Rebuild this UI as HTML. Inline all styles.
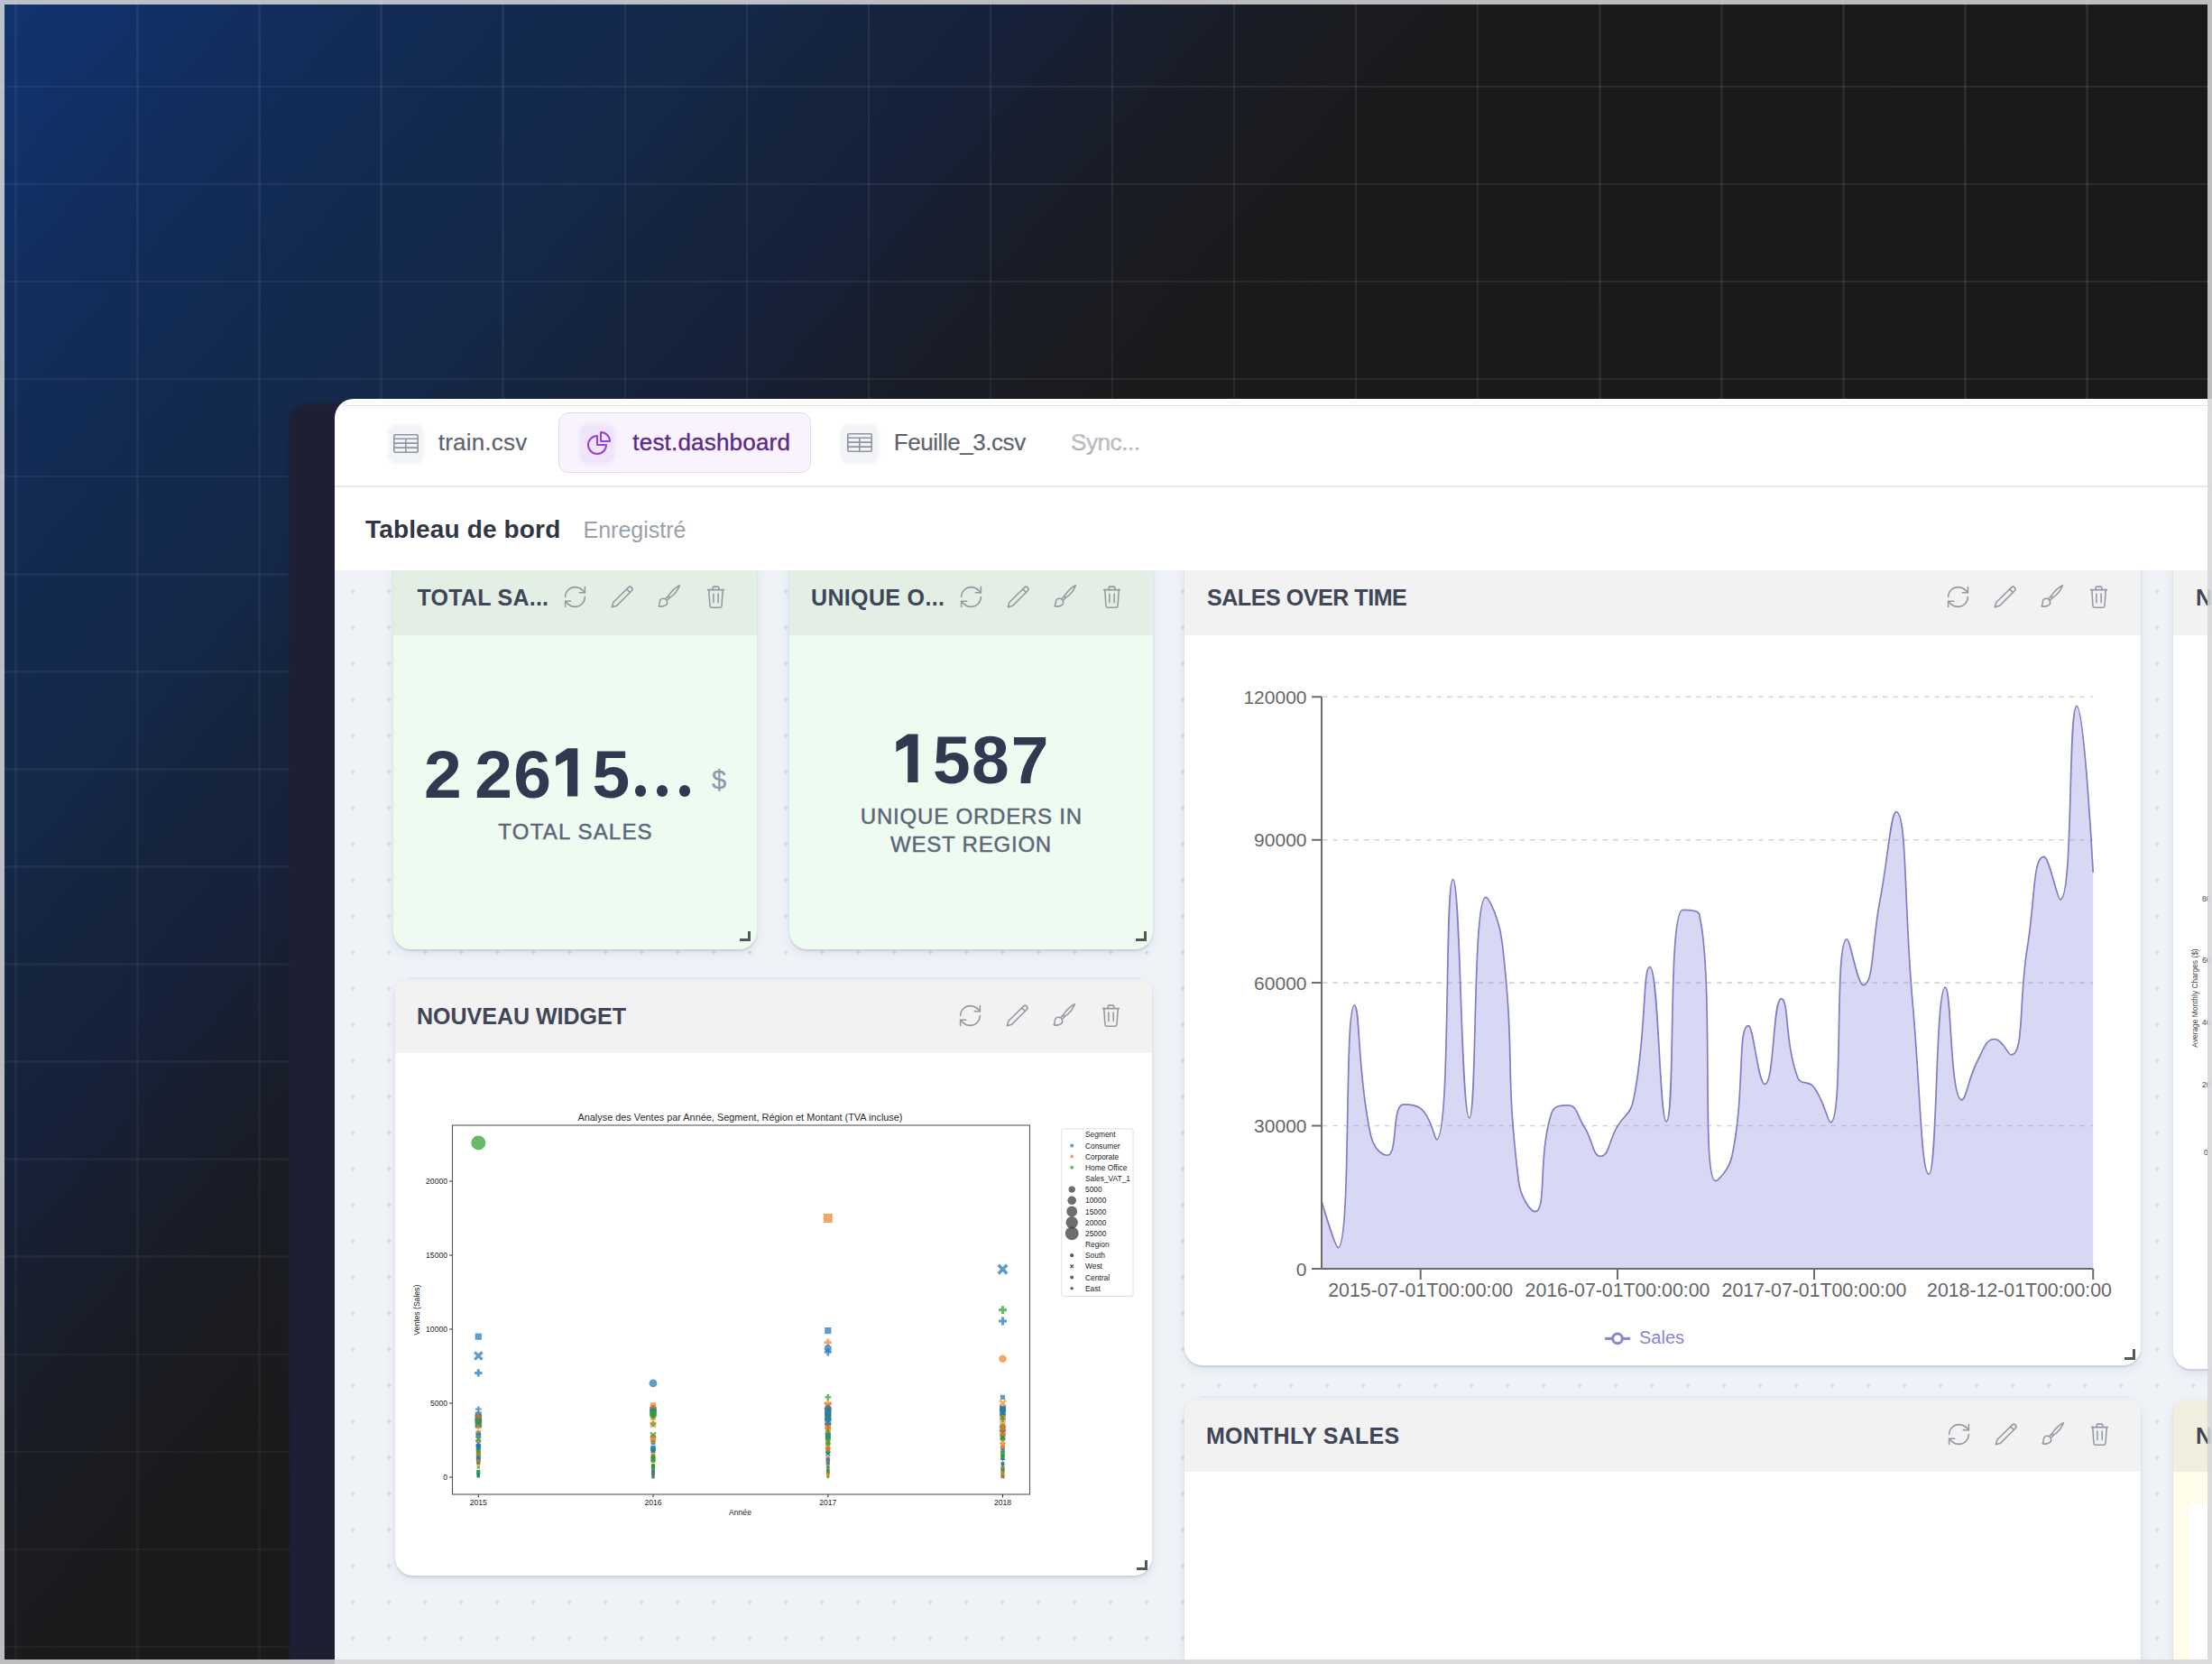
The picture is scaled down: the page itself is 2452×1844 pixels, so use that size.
<!DOCTYPE html>
<html><head><meta charset="utf-8">
<style>
*{box-sizing:border-box;margin:0;padding:0}
html,body{width:2452px;height:1844px;overflow:hidden;background:#c3c3c5;font-family:"Liberation Sans",sans-serif}
#bg{position:absolute;left:0;top:0;width:2452px;height:1844px;overflow:hidden;
 background:linear-gradient(131deg,#10336f 0%,#11316a 3%,#122d5c 8%,#122a50 14%,#142849 20%,#15243e 24%,#16213a 28%,#171f30 31%,#191c25 35%,#1a1b1e 39%,#1a1a1a 43%,#1a1a1a 100%)}
#bg .gv{position:absolute;top:0;width:2.5px;height:100%;background:rgba(255,255,255,0.085)}
#bg .gh{position:absolute;left:0;height:2.5px;width:100%;background:rgba(255,255,255,0.085)}
#grid{position:absolute;left:0;top:0;width:2452px;height:1844px;-webkit-mask-image:linear-gradient(to top right,rgba(0,0,0,0.42) 0%,rgba(0,0,0,0.62) 45%,#000 100%)}
#panel{position:absolute;left:320px;top:447px;width:200px;height:1500px;background:#1e1f33;border-radius:22px 0 0 0;filter:blur(1.5px)}
#win{position:absolute;left:371px;top:442px;width:2081px;height:1402px;background:#fff;border-radius:21px 0 0 0;overflow:hidden}
.abs{position:absolute}
.bd{position:absolute;background:rgba(214,214,216,0.87)}
.topline{position:absolute;left:9px;top:7.2px;right:0;height:1.2px;background:#e4e5ec}
.sep{position:absolute;left:0;top:96px;right:0;height:1.5px;background:#e6e7eb}
.ibox{position:absolute;width:36px;height:40px;border-radius:7px;background:#f2f3f6;box-shadow:0 0 4px 2px #f2f3f6}
.ibox > svg{position:absolute;left:4px;top:8.5px}
.tabt{position:absolute;font-size:26px;letter-spacing:0.2px;color:#5d6470;-webkit-text-stroke:0.2px #5d6470;white-space:nowrap;line-height:1}
.act{position:absolute;left:247.5px;top:15.3px;width:280px;height:67px;border-radius:11px;background:#f9f3fd;border:1.5px solid #e3dcef}
#dash{position:absolute;left:371px;top:632px;width:2081px;height:1212px;overflow:hidden;background-color:#eff3f8;
}
.card{position:absolute;border-radius:20px;overflow:hidden;box-shadow:0 1.5px 2px rgba(70,80,110,0.16),0 4px 12px rgba(70,80,110,0.10)}
.hdr{position:absolute;left:0;top:0;right:0;height:80.3px}
.ttl{position:absolute;left:26px;font-size:25px;font-weight:bold;color:#3e4657;white-space:nowrap;line-height:1}
.ic{position:absolute;width:29px;height:29px;fill:none;stroke:#949aa3;stroke-width:1.3;stroke-linecap:round;stroke-linejoin:round}
.bn{position:absolute;font-size:75px;font-weight:bold;color:#2f3a50;line-height:1}
.dot{position:absolute;width:12.4px;height:12.4px;border-radius:50%;background:#2f3a50}
.hdl{position:absolute;width:11.5px;height:11.5px;border-right:3.2px solid #535855;border-bottom:3.2px solid #535855}
#grid svg text{font-family:"Liberation Sans",sans-serif}
</style></head><body>
<div id="bg"><div id="grid"><div class="gv" style="left:16.25px"></div>
<div class="gv" style="left:151.31px"></div>
<div class="gv" style="left:286.37px"></div>
<div class="gv" style="left:421.43px"></div>
<div class="gv" style="left:556.49px"></div>
<div class="gv" style="left:691.55px"></div>
<div class="gv" style="left:826.61px"></div>
<div class="gv" style="left:961.67px"></div>
<div class="gv" style="left:1096.73px"></div>
<div class="gv" style="left:1231.79px"></div>
<div class="gv" style="left:1366.85px"></div>
<div class="gv" style="left:1501.91px"></div>
<div class="gv" style="left:1636.97px"></div>
<div class="gv" style="left:1772.03px"></div>
<div class="gv" style="left:1907.09px"></div>
<div class="gv" style="left:2042.15px"></div>
<div class="gv" style="left:2177.21px"></div>
<div class="gv" style="left:2312.27px"></div>
<div class="gv" style="left:2447.33px"></div>
<div class="gh" style="top:94.75px"></div>
<div class="gh" style="top:202.81px"></div>
<div class="gh" style="top:310.87px"></div>
<div class="gh" style="top:418.93px"></div>
<div class="gh" style="top:526.99px"></div>
<div class="gh" style="top:635.05px"></div>
<div class="gh" style="top:743.11px"></div>
<div class="gh" style="top:851.17px"></div>
<div class="gh" style="top:959.23px"></div>
<div class="gh" style="top:1067.29px"></div>
<div class="gh" style="top:1175.35px"></div>
<div class="gh" style="top:1283.41px"></div>
<div class="gh" style="top:1391.47px"></div>
<div class="gh" style="top:1499.53px"></div>
<div class="gh" style="top:1607.59px"></div>
<div class="gh" style="top:1715.65px"></div>
<div class="gh" style="top:1823.71px"></div></div><div id="panel"></div></div>
<div id="win">
  <div class="topline"></div>
  <div class="ibox" style="left:60.5px;top:30px"><svg viewBox="0 0 28 21" width="28" height="21" fill="none" stroke="#8f95a0" stroke-width="1.6"><rect x="0.8" y="0.8" width="26.4" height="19.4" rx="1.2"/><path d="M0.8 5.2h26.4M0.8 10.1h26.4M0.8 15.1h26.4M13.8 5.2v15"/></svg></div>
  <div class="tabt" style="left:114.8px;top:35.2px">train.csv</div>
  <div class="act"></div>
  <div class="ibox" style="left:273px;top:29.5px;background:#efe5fb;box-shadow:0 0 4px 2px #efe5fb"><div style="position:absolute;left:4.4px;top:3.5px"><svg viewBox="0 0 24 24" width="32" height="32" fill="none" stroke="#9a3fd6" stroke-width="1.5" stroke-linecap="round" stroke-linejoin="round"><path d="M10.5 6a7.5 7.5 0 1 0 7.5 7.5h-7.5V6Z"/><path d="M13.5 10.5H21A7.5 7.5 0 0 0 13.5 3v7.5Z"/></svg></div></div>
  <div class="tabt" style="left:330.3px;top:35.2px;color:#5b2a87;-webkit-text-stroke:0.35px #5b2a87">test.dashboard</div>
  <div class="ibox" style="left:562px;top:30px;width:39px"><div style="position:absolute;left:6px;top:8px"><svg viewBox="0 0 28 21" width="28" height="21" fill="none" stroke="#8f95a0" stroke-width="1.6"><rect x="0.8" y="0.8" width="26.4" height="19.4" rx="1.2"/><path d="M0.8 5.2h26.4M0.8 10.1h26.4M0.8 15.1h26.4M13.8 5.2v15"/></svg></div></div>
  <div class="tabt" style="left:619.8px;top:35.2px;letter-spacing:-0.45px">Feuille_3.csv</div>
  <div class="tabt" style="left:816px;top:35.2px;color:#c5c6c9;letter-spacing:-0.4px">Sync...</div>
  <div class="sep"></div>
  <div class="abs" style="left:34px;top:130.8px;letter-spacing:0.15px;font-size:28px;font-weight:bold;color:#2f3542;line-height:1;white-space:nowrap">Tableau de bord</div>
  <div class="abs" style="left:275.5px;top:133.3px;font-size:25px;color:#9aa1ab;line-height:1;white-space:nowrap">Enregistré</div>
</div>
<div id="dash"><svg style="position:absolute;left:0;top:0" width="2076" height="1207"><defs><pattern id="dp" width="40" height="40" patternUnits="userSpaceOnUse" x="0.3" y="3.5"><path d="M20 17.4v5.2M17.4 20h5.2" stroke="#b4b8c0" stroke-width="1.1" stroke-opacity="0.5"/><circle cx="20" cy="20" r="0.8" fill="#a9adb5" fill-opacity="0.55"/></pattern></defs><rect width="2076" height="1207" fill="url(#dp)"/></svg>
  <!-- card 1 -->
  <div class="card" style="border-radius:0 0 20px 20px;left:65px;top:-8.3px;width:403px;height:427.8px;background:#eefbf1">
    <div class="hdr" style="background:#e3efe4"></div>
  </div>
  <div class="ttl abs" style="left:91.5px;top:17.7px;letter-spacing:0.25px">TOTAL SA...</div>
  <svg class="ic" style="left:251.5px;top:15.0px" viewBox="0 0 24 24"><path d="M3 12a9 9 0 0 1 9-9 9.75 9.75 0 0 1 6.74 2.74L21 8"/><path d="M21 3v5h-5"/><path d="M21 12a9 9 0 0 1-9 9 9.75 9.75 0 0 1-6.74-2.74L3 16"/><path d="M8 16H3v5"/></svg>
<svg class="ic" style="left:303.5px;top:15.0px" viewBox="0 0 24 24"><path d="M17.8 3.4a2.1 2.1 0 0 1 3 3L7.2 20 2.8 21.3 4 17Z"/><path d="m16.3 4.9 3 3"/></svg>
<svg class="ic" style="left:355.5px;top:15.0px" viewBox="0 0 24 24"><g transform="translate(0,-1)"><path d="M21.8 2.4C17.9 4.3 14 8.1 11.3 12.3L12.7 13.7C16.9 11 20.2 6.9 21.8 2.4Z"/><path d="M11.3 12.3L9.4 14.2M12.7 13.7L10.8 15.6"/><path d="M2.6 21.4C3.6 20.6 3.2 19 3.6 17.9A3.4 3.4 0 1 1 7.9 21.1C6.4 21.9 4.2 21.9 2.6 21.4Z"/></g></svg>
<svg class="ic" style="left:407.5px;top:15.0px" viewBox="0 0 24 24"><path d="M4.6 5.5H19.4"/><path d="M9.3 5.5V3.3a.7.7 0 0 1 .7-.7h4a.7.7 0 0 1 .7.7V5.5"/><path d="M5.6 5.5l1 14.8a1.5 1.5 0 0 0 1.5 1.4h7.8a1.5 1.5 0 0 0 1.5-1.4l1-14.8"/><path d="M9.8 9.2v8M14.2 9.2v8"/></svg>
  <div class="bn" style="left:99.0px;top:188.5px">2</div><div class="bn" style="left:155.2px;top:188.5px">2</div><div class="bn" style="left:198.3px;top:188.5px">6</div><div class="bn" style="left:285.6px;top:188.5px">5</div>
  <div class="dot" style="left:332.6px;top:238.4px"></div><div class="dot" style="left:357.0px;top:238.4px"></div><div class="dot" style="left:381.5px;top:238.4px"></div>
  <div class="abs" style="left:418.0px;top:218.0px;font-size:29px;color:#8c98aa;line-height:1;-webkit-text-stroke:0.3px #8c98aa">$</div>
  <div class="abs" style="left:65px;width:403px;text-align:center;top:277.5px;font-size:24px;color:#5b6678;letter-spacing:1.2px;text-indent:1.2px;line-height:1;-webkit-text-stroke:0.45px #5b6678">TOTAL SALES</div>
  <div class="hdl" style="left:449.0px;top:399.5px"></div>

  <!-- card 2 -->
  <div class="card" style="border-radius:0 0 20px 20px;left:504px;top:-8.3px;width:403px;height:427.8px;background:#eefbf1">
    <div class="hdr" style="background:#e3efe4"></div>
  </div>
  <div class="ttl abs" style="left:528.0px;top:17.7px;letter-spacing:0.35px">UNIQUE O...</div>
  <svg class="ic" style="left:690.5px;top:15.0px" viewBox="0 0 24 24"><path d="M3 12a9 9 0 0 1 9-9 9.75 9.75 0 0 1 6.74 2.74L21 8"/><path d="M21 3v5h-5"/><path d="M21 12a9 9 0 0 1-9 9 9.75 9.75 0 0 1-6.74-2.74L3 16"/><path d="M8 16H3v5"/></svg>
<svg class="ic" style="left:742.5px;top:15.0px" viewBox="0 0 24 24"><path d="M17.8 3.4a2.1 2.1 0 0 1 3 3L7.2 20 2.8 21.3 4 17Z"/><path d="m16.3 4.9 3 3"/></svg>
<svg class="ic" style="left:794.5px;top:15.0px" viewBox="0 0 24 24"><g transform="translate(0,-1)"><path d="M21.8 2.4C17.9 4.3 14 8.1 11.3 12.3L12.7 13.7C16.9 11 20.2 6.9 21.8 2.4Z"/><path d="M11.3 12.3L9.4 14.2M12.7 13.7L10.8 15.6"/><path d="M2.6 21.4C3.6 20.6 3.2 19 3.6 17.9A3.4 3.4 0 1 1 7.9 21.1C6.4 21.9 4.2 21.9 2.6 21.4Z"/></g></svg>
<svg class="ic" style="left:846.5px;top:15.0px" viewBox="0 0 24 24"><path d="M4.6 5.5H19.4"/><path d="M9.3 5.5V3.3a.7.7 0 0 1 .7-.7h4a.7.7 0 0 1 .7.7V5.5"/><path d="M5.6 5.5l1 14.8a1.5 1.5 0 0 0 1.5 1.4h7.8a1.5 1.5 0 0 0 1.5-1.4l1-14.8"/><path d="M9.8 9.2v8M14.2 9.2v8"/></svg>
  <div class="bn" style="left:663.0px;top:172.9px">5</div><div class="bn" style="left:706.0px;top:172.9px">8</div><div class="bn" style="left:749.8px;top:172.9px">7</div>
  <div class="abs" style="left:504px;width:403px;text-align:center;top:256.5px;font-size:24px;color:#5b6678;letter-spacing:0.8px;text-indent:0.8px;line-height:31.7px;-webkit-text-stroke:0.45px #5b6678">UNIQUE ORDERS IN<br>WEST REGION</div>
  <div class="hdl" style="left:888.0px;top:399.5px"></div>

  <!-- card 3 sales over time -->
  <div class="card" style="border-radius:0 0 20px 20px;left:942px;top:-8.3px;width:1060px;height:889.3px;background:#fff">
    <div class="hdr" style="background:#f2f2f2"></div>
  </div>
  <div class="ttl abs" style="left:967.0px;top:17.7px;letter-spacing:-0.43px">SALES OVER TIME</div>
  <svg class="ic" style="left:1785.0px;top:15.0px" viewBox="0 0 24 24"><path d="M3 12a9 9 0 0 1 9-9 9.75 9.75 0 0 1 6.74 2.74L21 8"/><path d="M21 3v5h-5"/><path d="M21 12a9 9 0 0 1-9 9 9.75 9.75 0 0 1-6.74-2.74L3 16"/><path d="M8 16H3v5"/></svg>
<svg class="ic" style="left:1837.0px;top:15.0px" viewBox="0 0 24 24"><path d="M17.8 3.4a2.1 2.1 0 0 1 3 3L7.2 20 2.8 21.3 4 17Z"/><path d="m16.3 4.9 3 3"/></svg>
<svg class="ic" style="left:1889.0px;top:15.0px" viewBox="0 0 24 24"><g transform="translate(0,-1)"><path d="M21.8 2.4C17.9 4.3 14 8.1 11.3 12.3L12.7 13.7C16.9 11 20.2 6.9 21.8 2.4Z"/><path d="M11.3 12.3L9.4 14.2M12.7 13.7L10.8 15.6"/><path d="M2.6 21.4C3.6 20.6 3.2 19 3.6 17.9A3.4 3.4 0 1 1 7.9 21.1C6.4 21.9 4.2 21.9 2.6 21.4Z"/></g></svg>
<svg class="ic" style="left:1941.0px;top:15.0px" viewBox="0 0 24 24"><path d="M4.6 5.5H19.4"/><path d="M9.3 5.5V3.3a.7.7 0 0 1 .7-.7h4a.7.7 0 0 1 .7.7V5.5"/><path d="M5.6 5.5l1 14.8a1.5 1.5 0 0 0 1.5 1.4h7.8a1.5 1.5 0 0 0 1.5-1.4l1-14.8"/><path d="M9.8 9.2v8M14.2 9.2v8"/></svg>
  <div class="hdl" style="left:1984.0px;top:863.0px"></div>

  <!-- card 4 partial right -->
  <div class="card" style="border-radius:0 0 20px 20px;left:2038px;top:-8.3px;width:600px;height:893.3px;background:#fff">
    <div class="hdr" style="background:#f2f2f2"></div>
  </div>
  <div class="ttl abs" style="left:2063.0px;top:17.7px">N</div>

  <!-- card 5 nouveau widget -->
  <div class="abs" style="left:81px;top:450.6px;width:812px;height:2px;background:#e2ecf6;border-radius:1px"></div>
  <div class="card" style="border-radius:12px 12px 20px 20px;left:66.5px;top:454.7px;width:839.5px;height:659.3px;background:#fff">
    <div class="hdr" style="background:#f2f2f2"></div>
  </div>
  <div class="ttl abs" style="left:91.0px;top:481.5px">NOUVEAU WIDGET</div>
  <svg class="ic" style="left:690.0px;top:479.0px" viewBox="0 0 24 24"><path d="M3 12a9 9 0 0 1 9-9 9.75 9.75 0 0 1 6.74 2.74L21 8"/><path d="M21 3v5h-5"/><path d="M21 12a9 9 0 0 1-9 9 9.75 9.75 0 0 1-6.74-2.74L3 16"/><path d="M8 16H3v5"/></svg>
<svg class="ic" style="left:742.0px;top:479.0px" viewBox="0 0 24 24"><path d="M17.8 3.4a2.1 2.1 0 0 1 3 3L7.2 20 2.8 21.3 4 17Z"/><path d="m16.3 4.9 3 3"/></svg>
<svg class="ic" style="left:794.0px;top:479.0px" viewBox="0 0 24 24"><g transform="translate(0,-1)"><path d="M21.8 2.4C17.9 4.3 14 8.1 11.3 12.3L12.7 13.7C16.9 11 20.2 6.9 21.8 2.4Z"/><path d="M11.3 12.3L9.4 14.2M12.7 13.7L10.8 15.6"/><path d="M2.6 21.4C3.6 20.6 3.2 19 3.6 17.9A3.4 3.4 0 1 1 7.9 21.1C6.4 21.9 4.2 21.9 2.6 21.4Z"/></g></svg>
<svg class="ic" style="left:846.0px;top:479.0px" viewBox="0 0 24 24"><path d="M4.6 5.5H19.4"/><path d="M9.3 5.5V3.3a.7.7 0 0 1 .7-.7h4a.7.7 0 0 1 .7.7V5.5"/><path d="M5.6 5.5l1 14.8a1.5 1.5 0 0 0 1.5 1.4h7.8a1.5 1.5 0 0 0 1.5-1.4l1-14.8"/><path d="M9.8 9.2v8M14.2 9.2v8"/></svg>
  <div class="hdl" style="left:889.0px;top:1096.5px"></div>

  <!-- card 6 monthly sales -->
  <div class="abs" style="left:959px;top:915.0px;width:1030px;height:2px;background:#e2ecf6;border-radius:1px"></div>
  <div class="card" style="border-radius:14px 14px 20px 20px;left:942px;top:920.0px;width:1060px;height:600px;background:#fff">
    <div class="hdr" style="background:#f2f2f2;height:79.4px"></div>
  </div>
  <div class="ttl abs" style="left:966.0px;top:946.5px;letter-spacing:0.25px">MONTHLY SALES</div>
  <svg class="ic" style="left:1785.5px;top:942.5px" viewBox="0 0 24 24"><path d="M3 12a9 9 0 0 1 9-9 9.75 9.75 0 0 1 6.74 2.74L21 8"/><path d="M21 3v5h-5"/><path d="M21 12a9 9 0 0 1-9 9 9.75 9.75 0 0 1-6.74-2.74L3 16"/><path d="M8 16H3v5"/></svg>
<svg class="ic" style="left:1837.5px;top:942.5px" viewBox="0 0 24 24"><path d="M17.8 3.4a2.1 2.1 0 0 1 3 3L7.2 20 2.8 21.3 4 17Z"/><path d="m16.3 4.9 3 3"/></svg>
<svg class="ic" style="left:1889.5px;top:942.5px" viewBox="0 0 24 24"><g transform="translate(0,-1)"><path d="M21.8 2.4C17.9 4.3 14 8.1 11.3 12.3L12.7 13.7C16.9 11 20.2 6.9 21.8 2.4Z"/><path d="M11.3 12.3L9.4 14.2M12.7 13.7L10.8 15.6"/><path d="M2.6 21.4C3.6 20.6 3.2 19 3.6 17.9A3.4 3.4 0 1 1 7.9 21.1C6.4 21.9 4.2 21.9 2.6 21.4Z"/></g></svg>
<svg class="ic" style="left:1941.5px;top:942.5px" viewBox="0 0 24 24"><path d="M4.6 5.5H19.4"/><path d="M9.3 5.5V3.3a.7.7 0 0 1 .7-.7h4a.7.7 0 0 1 .7.7V5.5"/><path d="M5.6 5.5l1 14.8a1.5 1.5 0 0 0 1.5 1.4h7.8a1.5 1.5 0 0 0 1.5-1.4l1-14.8"/><path d="M9.8 9.2v8M14.2 9.2v8"/></svg>

  <!-- card 7 partial -->
  <div class="card" style="border-radius:14px 0 0 0;left:2038px;top:920.0px;width:600px;height:600px;background:#fdfdea">
    <div class="hdr" style="background:#efeedf;height:79.4px"></div>
    <div style="position:absolute;left:17px;top:114px;width:500px;height:400px;background:#fff;border-radius:8px"></div>
  </div>
  <div class="ttl abs" style="left:2063.0px;top:946.5px">N</div>
</div>

<!-- charts overlay in page coordinates -->
<svg class="abs" style="left:0;top:0;overflow:hidden" width="2452" height="1844" viewBox="0 0 2452 1844">
  <g font-family="Liberation Sans, sans-serif">
  <path d="M629.0,829.3H640.3V882.5H629.0V841.9L616.2,848.9V837.7Z" fill="#2f3a50"/><path d="M1006.2,813.6H1017.5V866.9H1006.2V826.2L993.4,833.2V822.0Z" fill="#2f3a50"/>
  <!-- echarts line -->
  <g stroke="#d4d4d8" stroke-width="1.6" stroke-dasharray="5.5 6">
    <path d="M1466 772.3H2320.2M1466 930.7H2320.2M1466 1089.1H2320.2M1466 1247.5H2320.2"/>
  </g>
  <path d="M1465.00,1331.15 C1465.00,1331.15 1480.13,1382.55 1483.20,1382.55 C1498.33,1382.55 1489.59,1114.10 1501.39,1114.10 C1507.79,1114.10 1504.33,1189.16 1519.59,1258.80 C1522.53,1272.24 1531.92,1280.26 1537.78,1280.26 C1550.12,1280.26 1542.14,1223.87 1555.98,1223.87 C1560.33,1223.87 1568.33,1223.87 1574.17,1227.87 C1586.53,1236.31 1590.19,1262.79 1592.37,1262.79 C1608.38,1262.79 1601.08,974.39 1610.57,974.39 C1619.27,974.39 1619.31,1238.85 1628.76,1238.85 C1637.50,1238.85 1632.00,994.34 1646.96,994.34 C1650.20,994.34 1662.12,1018.01 1665.15,1044.24 C1680.31,1175.18 1667.46,1178.43 1683.35,1308.70 C1685.66,1327.62 1696.84,1342.63 1701.54,1342.63 C1715.03,1342.63 1704.37,1282.68 1719.74,1233.86 C1722.57,1224.87 1730.61,1224.87 1737.94,1224.87 C1748.80,1224.87 1748.00,1236.22 1756.13,1248.82 C1766.19,1264.41 1765.23,1281.26 1774.33,1281.26 C1783.43,1281.26 1783.15,1264.88 1792.52,1248.82 C1801.35,1233.69 1807.24,1235.81 1810.72,1218.88 C1825.44,1147.24 1820.49,1071.69 1828.91,1071.69 C1838.69,1071.69 1839.42,1242.84 1847.11,1242.84 C1857.62,1242.84 1848.45,1008.32 1865.31,1008.32 C1866.65,1008.32 1882.42,1008.32 1883.50,1012.81 C1900.62,1083.89 1885.32,1308.70 1901.70,1308.70 C1903.52,1308.70 1916.54,1297.11 1919.89,1281.26 C1934.74,1211.04 1925.64,1136.55 1938.09,1136.55 C1943.84,1136.55 1948.81,1201.42 1956.29,1201.42 C1967.00,1201.42 1965.02,1106.61 1974.48,1106.61 C1983.22,1106.61 1977.98,1154.24 1992.68,1193.94 C1996.18,1203.39 2004.85,1196.66 2010.87,1204.92 C2023.05,1221.61 2025.90,1243.83 2029.07,1243.83 C2044.10,1243.83 2032.88,1040.75 2047.26,1040.75 C2051.08,1040.75 2058.82,1091.64 2065.46,1091.64 C2077.01,1091.64 2074.91,1045.62 2083.66,999.46 C2093.11,949.57 2095.95,899.54 2101.85,899.54 C2114.14,899.54 2110.50,1004.95 2120.05,1110.27 C2128.70,1205.78 2129.51,1301.21 2138.24,1301.21 C2147.71,1301.21 2145.11,1094.14 2156.44,1094.14 C2163.31,1094.14 2161.49,1218.88 2174.63,1218.88 C2179.69,1218.88 2181.43,1195.07 2192.83,1173.98 C2199.63,1161.39 2201.31,1151.52 2211.03,1151.52 C2219.50,1151.52 2226.09,1168.99 2229.22,1168.99 C2244.28,1168.99 2237.51,1108.97 2247.42,1049.23 C2255.71,999.20 2253.49,949.43 2265.61,949.43 C2271.68,949.43 2280.34,996.84 2283.81,996.84 C2298.53,996.84 2292.23,782.28 2302.00,782.28 C2310.43,782.28 2320.20,966.90 2320.20,966.90 L2320.20,1406.00 L1465.00,1406.00 Z" fill="#8a86dc" fill-opacity="0.32"/>
  <path d="M1465.00,1331.15 C1465.00,1331.15 1480.13,1382.55 1483.20,1382.55 C1498.33,1382.55 1489.59,1114.10 1501.39,1114.10 C1507.79,1114.10 1504.33,1189.16 1519.59,1258.80 C1522.53,1272.24 1531.92,1280.26 1537.78,1280.26 C1550.12,1280.26 1542.14,1223.87 1555.98,1223.87 C1560.33,1223.87 1568.33,1223.87 1574.17,1227.87 C1586.53,1236.31 1590.19,1262.79 1592.37,1262.79 C1608.38,1262.79 1601.08,974.39 1610.57,974.39 C1619.27,974.39 1619.31,1238.85 1628.76,1238.85 C1637.50,1238.85 1632.00,994.34 1646.96,994.34 C1650.20,994.34 1662.12,1018.01 1665.15,1044.24 C1680.31,1175.18 1667.46,1178.43 1683.35,1308.70 C1685.66,1327.62 1696.84,1342.63 1701.54,1342.63 C1715.03,1342.63 1704.37,1282.68 1719.74,1233.86 C1722.57,1224.87 1730.61,1224.87 1737.94,1224.87 C1748.80,1224.87 1748.00,1236.22 1756.13,1248.82 C1766.19,1264.41 1765.23,1281.26 1774.33,1281.26 C1783.43,1281.26 1783.15,1264.88 1792.52,1248.82 C1801.35,1233.69 1807.24,1235.81 1810.72,1218.88 C1825.44,1147.24 1820.49,1071.69 1828.91,1071.69 C1838.69,1071.69 1839.42,1242.84 1847.11,1242.84 C1857.62,1242.84 1848.45,1008.32 1865.31,1008.32 C1866.65,1008.32 1882.42,1008.32 1883.50,1012.81 C1900.62,1083.89 1885.32,1308.70 1901.70,1308.70 C1903.52,1308.70 1916.54,1297.11 1919.89,1281.26 C1934.74,1211.04 1925.64,1136.55 1938.09,1136.55 C1943.84,1136.55 1948.81,1201.42 1956.29,1201.42 C1967.00,1201.42 1965.02,1106.61 1974.48,1106.61 C1983.22,1106.61 1977.98,1154.24 1992.68,1193.94 C1996.18,1203.39 2004.85,1196.66 2010.87,1204.92 C2023.05,1221.61 2025.90,1243.83 2029.07,1243.83 C2044.10,1243.83 2032.88,1040.75 2047.26,1040.75 C2051.08,1040.75 2058.82,1091.64 2065.46,1091.64 C2077.01,1091.64 2074.91,1045.62 2083.66,999.46 C2093.11,949.57 2095.95,899.54 2101.85,899.54 C2114.14,899.54 2110.50,1004.95 2120.05,1110.27 C2128.70,1205.78 2129.51,1301.21 2138.24,1301.21 C2147.71,1301.21 2145.11,1094.14 2156.44,1094.14 C2163.31,1094.14 2161.49,1218.88 2174.63,1218.88 C2179.69,1218.88 2181.43,1195.07 2192.83,1173.98 C2199.63,1161.39 2201.31,1151.52 2211.03,1151.52 C2219.50,1151.52 2226.09,1168.99 2229.22,1168.99 C2244.28,1168.99 2237.51,1108.97 2247.42,1049.23 C2255.71,999.20 2253.49,949.43 2265.61,949.43 C2271.68,949.43 2280.34,996.84 2283.81,996.84 C2298.53,996.84 2292.23,782.28 2302.00,782.28 C2310.43,782.28 2320.20,966.90 2320.20,966.90" fill="none" stroke="#817dc0" stroke-width="1.7"/>
  <g stroke="#6c6c70" stroke-width="2">
    <path d="M1465 772.3V1406M1454 772.3H1465M1454 930.7H1465M1454 1089.1H1465M1454 1247.5H1465M1454 1406H1465"/>
    <path d="M1465 1406H2320.2M1574.7 1406V1418M1793 1406V1418M2011 1406V1418M2320.2 1406V1418"/>
  </g>
  <g fill="#666668" font-size="21" text-anchor="end">
    <text x="1448.5" y="779.5">120000</text><text x="1448.5" y="938">90000</text><text x="1448.5" y="1096.5">60000</text><text x="1448.5" y="1255">30000</text><text x="1448.5" y="1413.5">0</text>
  </g>
  <g fill="#666668" font-size="21.3" text-anchor="middle">
    <text x="1574.7" y="1437">2015-07-01T00:00:00</text><text x="1793" y="1437">2016-07-01T00:00:00</text><text x="2011" y="1437">2017-07-01T00:00:00</text><text x="2238.5" y="1437">2018-12-01T00:00:00</text>
  </g>
  <path d="M1779 1483.4H1807.2" stroke="#8884d8" stroke-width="3"/>
  <circle cx="1793" cy="1483.4" r="5.3" fill="#fff" stroke="#8884d8" stroke-width="3"/>
  <text x="1817" y="1488.5" font-size="20" fill="#8884d8">Sales</text>

  <!-- matplotlib scatter -->
  <text x="820.5" y="1242" font-size="10.9" fill="#2a2a2a" text-anchor="middle">Analyse des Ventes par Année, Segment, Région et Montant (TVA incluse)</text>
  <rect x="501.5" y="1247" width="640" height="409" fill="none" stroke="#555" stroke-width="1.1"/>
  <g stroke="#333" stroke-width="1"><path d="M498 1637H501.5M498 1555H501.5M498 1473H501.5M498 1391H501.5M498 1309H501.5M530.3 1656V1659.5M724 1656V1659.5M917.8 1656V1659.5M1111.5 1656V1659.5"/></g>
  <g font-size="8.6" fill="#222" text-anchor="end">
    <text x="496" y="1640">0</text><text x="496" y="1558">5000</text><text x="496" y="1476">10000</text><text x="496" y="1394">15000</text><text x="496" y="1312">20000</text>
  </g>
  <g font-size="8.6" fill="#222" text-anchor="middle">
    <text x="530.3" y="1667.5">2015</text><text x="724" y="1667.5">2016</text><text x="917.8" y="1667.5">2017</text><text x="1111.5" y="1667.5">2018</text>
    <text x="820.5" y="1679">Année</text>
  </g>
  <text transform="translate(465,1451.7) rotate(-90)" font-size="8.6" fill="#222" text-anchor="middle">Ventes (Sales)</text>
  <rect x="528.3" y="1620.4" width="4.0" height="4.0" fill="rgba(240,120,20,0.66)"/>
<circle cx="530.3" cy="1635.2" r="1.6" fill="rgba(240,120,20,0.66)"/>
<rect x="527.3" y="1572.2" width="6.0" height="6.0" fill="rgba(31,119,180,0.72)"/>
<rect x="528.2" y="1614.1" width="4.3" height="4.3" fill="rgba(31,119,180,0.72)"/>
<circle cx="530.3" cy="1635.7" r="1.7" fill="rgba(31,119,180,0.72)"/>
<circle cx="530.3" cy="1603.9" r="2.5" fill="rgba(44,160,44,0.72)"/>
<rect x="528.7" y="1634.3" width="3.2" height="3.2" fill="rgba(31,119,180,0.72)"/>
<path d="M528.6,1632.8H532.0M530.3,1631.1V1634.5" stroke="rgba(31,119,180,0.72)" stroke-width="1.2"/>
<rect x="527.8" y="1602.4" width="4.9" height="4.9" fill="rgba(31,119,180,0.72)"/>
<path d="M527.7,1596.8L532.9,1601.9M532.9,1596.8L527.7,1601.9" stroke="rgba(31,119,180,0.72)" stroke-width="2.0"/>
<circle cx="530.3" cy="1635.5" r="1.4" fill="rgba(44,160,44,0.72)"/>
<path d="M527.7,1595.9H532.9M530.3,1593.2V1598.5" stroke="rgba(240,120,20,0.66)" stroke-width="1.9"/>
<path d="M527.2,1570.8L533.4,1577.0M533.4,1570.8L527.2,1577.0" stroke="rgba(240,120,20,0.66)" stroke-width="2.4"/>
<rect x="528.5" y="1628.9" width="3.5" height="3.5" fill="rgba(31,119,180,0.72)"/>
<path d="M528.0,1606.1L532.6,1610.7M532.6,1606.1L528.0,1610.7" stroke="rgba(44,160,44,0.72)" stroke-width="1.7"/>
<circle cx="530.3" cy="1601.8" r="2.5" fill="rgba(31,119,180,0.72)"/>
<path d="M528.4,1629.4L532.2,1633.3M532.2,1629.4L528.4,1633.3" stroke="rgba(31,119,180,0.72)" stroke-width="1.5"/>
<circle cx="530.3" cy="1615.9" r="2.2" fill="rgba(44,160,44,0.72)"/>
<path d="M527.1,1575.2L533.5,1581.7M533.5,1575.2L527.1,1581.7" stroke="rgba(240,120,20,0.66)" stroke-width="2.4"/>
<path d="M527.7,1603.0H532.9M530.3,1600.3V1605.6" stroke="rgba(31,119,180,0.72)" stroke-width="1.9"/>
<path d="M526.9,1571.9H533.7M530.3,1568.5V1575.3" stroke="rgba(44,160,44,0.72)" stroke-width="2.4"/>
<path d="M528.7,1634.0L531.9,1637.2M531.9,1634.0L528.7,1637.2" stroke="rgba(44,160,44,0.72)" stroke-width="1.2"/>
<path d="M527.5,1595.8H533.1M530.3,1593.0V1598.6" stroke="rgba(240,120,20,0.66)" stroke-width="2.0"/>
<path d="M526.9,1574.0L533.7,1580.7M533.7,1574.0L526.9,1580.7" stroke="rgba(31,119,180,0.72)" stroke-width="2.6"/>
<circle cx="530.3" cy="1620.4" r="1.8" fill="rgba(240,120,20,0.66)"/>
<rect x="527.6" y="1585.5" width="5.5" height="5.5" fill="rgba(44,160,44,0.72)"/>
<path d="M528.4,1618.1H532.2M530.3,1616.2V1620.0" stroke="rgba(31,119,180,0.72)" stroke-width="1.4"/>
<path d="M528.1,1615.1L532.5,1619.6M532.5,1615.1L528.1,1619.6" stroke="rgba(31,119,180,0.72)" stroke-width="1.7"/>
<path d="M527.3,1576.5L533.3,1582.6M533.3,1576.5L527.3,1582.6" stroke="rgba(44,160,44,0.72)" stroke-width="2.3"/>
<path d="M528.5,1620.2H532.1M530.3,1618.4V1622.0" stroke="rgba(31,119,180,0.72)" stroke-width="1.3"/>
<rect x="528.7" y="1629.2" width="3.2" height="3.2" fill="rgba(44,160,44,0.72)"/>
<rect x="528.2" y="1609.3" width="4.3" height="4.3" fill="rgba(240,120,20,0.66)"/>
<path d="M528.6,1630.5L532.0,1634.0M532.0,1630.5L528.6,1634.0" stroke="rgba(44,160,44,0.72)" stroke-width="1.3"/>
<circle cx="530.3" cy="1571.1" r="3.5" fill="rgba(240,120,20,0.66)"/>
<path d="M527.5,1587.2H533.1M530.3,1584.4V1590.0" stroke="rgba(240,120,20,0.66)" stroke-width="2.0"/>
<path d="M528.8,1634.1H531.8M530.3,1632.6V1635.5" stroke="rgba(31,119,180,0.72)" stroke-width="1.1"/>
<path d="M527.1,1568.0H533.5M530.3,1564.8V1571.2" stroke="rgba(31,119,180,0.72)" stroke-width="2.3"/>
<circle cx="530.3" cy="1602.4" r="2.5" fill="rgba(31,119,180,0.72)"/>
<path d="M528.2,1605.4L532.4,1609.6M532.4,1605.4L528.2,1609.6" stroke="rgba(44,160,44,0.72)" stroke-width="1.6"/>
<path d="M527.1,1578.6H533.5M530.3,1575.4V1581.8" stroke="rgba(31,119,180,0.72)" stroke-width="2.3"/>
<path d="M527.2,1567.7L533.4,1574.0M533.4,1567.7L527.2,1574.0" stroke="rgba(240,120,20,0.66)" stroke-width="2.4"/>
<path d="M527.3,1580.9H533.3M530.3,1577.9V1584.0" stroke="rgba(240,120,20,0.66)" stroke-width="2.2"/>
<circle cx="530.3" cy="1634.7" r="1.5" fill="rgba(44,160,44,0.72)"/>
<rect x="528.7" y="1624.4" width="3.2" height="3.2" fill="rgba(44,160,44,0.72)"/>
<path d="M526.9,1567.9L533.7,1574.7M533.7,1567.9L526.9,1574.7" stroke="rgba(31,119,180,0.72)" stroke-width="2.6"/>
<path d="M526.9,1571.4L533.7,1578.2M533.7,1571.4L526.9,1578.2" stroke="rgba(44,160,44,0.72)" stroke-width="2.6"/>
<path d="M527.7,1591.9L532.9,1597.1M532.9,1591.9L527.7,1597.1" stroke="rgba(44,160,44,0.72)" stroke-width="2.0"/>
<rect x="528.6" y="1629.5" width="3.5" height="3.5" fill="rgba(44,160,44,0.72)"/>
<rect x="527.9" y="1607.6" width="4.9" height="4.9" fill="rgba(44,160,44,0.72)"/>
<rect x="526.7" y="1564.4" width="7.1" height="7.1" fill="rgba(31,119,180,0.72)"/>
<rect x="527.5" y="1587.9" width="5.6" height="5.6" fill="rgba(31,119,180,0.72)"/>
<circle cx="530.3" cy="1620.4" r="2.1" fill="rgba(31,119,180,0.72)"/>
<rect x="528.0" y="1610.1" width="4.5" height="4.5" fill="rgba(44,160,44,0.72)"/>
<path d="M528.5,1619.4L532.1,1622.9M532.1,1619.4L528.5,1622.9" stroke="rgba(240,120,20,0.66)" stroke-width="1.3"/>
<path d="M528.8,1634.1H531.8M530.3,1632.6V1635.7" stroke="rgba(31,119,180,0.72)" stroke-width="1.1"/>
<circle cx="530.3" cy="1611.6" r="2.4" fill="rgba(240,120,20,0.66)"/>
<circle cx="530.3" cy="1621.2" r="1.8" fill="rgba(44,160,44,0.72)"/>
<rect x="528.1" y="1616.0" width="4.5" height="4.5" fill="rgba(240,120,20,0.66)"/>
<path d="M528.0,1612.8L532.6,1617.4M532.6,1612.8L528.0,1617.4" stroke="rgba(31,119,180,0.72)" stroke-width="1.7"/>
<path d="M527.0,1569.3H533.6M530.3,1565.9V1572.6" stroke="rgba(240,120,20,0.66)" stroke-width="2.4"/>
<rect x="720.3" y="1561.9" width="7.4" height="7.4" fill="rgba(31,119,180,0.72)"/>
<path d="M722.6,1636.5H725.4M724.0,1635.1V1637.9" stroke="rgba(44,160,44,0.72)" stroke-width="1.0"/>
<path d="M720.6,1578.0H727.4M724.0,1574.6V1581.3" stroke="rgba(44,160,44,0.72)" stroke-width="2.4"/>
<rect x="722.5" y="1629.8" width="2.9" height="2.9" fill="rgba(31,119,180,0.72)"/>
<circle cx="724.0" cy="1563.0" r="3.7" fill="rgba(44,160,44,0.72)"/>
<rect x="722.6" y="1630.7" width="2.9" height="2.9" fill="rgba(31,119,180,0.72)"/>
<rect x="722.3" y="1626.5" width="3.4" height="3.4" fill="rgba(44,160,44,0.72)"/>
<rect x="721.4" y="1601.5" width="5.3" height="5.3" fill="rgba(31,119,180,0.72)"/>
<path d="M721.9,1619.0H726.1M724.0,1616.9V1621.1" stroke="rgba(44,160,44,0.72)" stroke-width="1.5"/>
<path d="M720.8,1570.0H727.2M724.0,1566.9V1573.2" stroke="rgba(44,160,44,0.72)" stroke-width="2.3"/>
<circle cx="724.0" cy="1631.5" r="1.8" fill="rgba(240,120,20,0.66)"/>
<rect x="721.6" y="1596.1" width="4.8" height="4.8" fill="rgba(31,119,180,0.72)"/>
<circle cx="724.0" cy="1597.6" r="2.4" fill="rgba(44,160,44,0.72)"/>
<path d="M721.0,1591.9H727.0M724.0,1588.9V1594.8" stroke="rgba(31,119,180,0.72)" stroke-width="2.1"/>
<rect x="722.6" y="1634.3" width="2.7" height="2.7" fill="rgba(240,120,20,0.66)"/>
<path d="M722.6,1634.0H725.4M724.0,1632.6V1635.4" stroke="rgba(44,160,44,0.72)" stroke-width="1.0"/>
<circle cx="724.0" cy="1571.1" r="3.2" fill="rgba(240,120,20,0.66)"/>
<rect x="720.6" y="1559.3" width="6.9" height="6.9" fill="rgba(44,160,44,0.72)"/>
<path d="M721.4,1607.1H726.6M724.0,1604.6V1609.7" stroke="rgba(44,160,44,0.72)" stroke-width="1.9"/>
<path d="M721.0,1587.3L727.0,1593.3M727.0,1587.3L721.0,1593.3" stroke="rgba(44,160,44,0.72)" stroke-width="2.3"/>
<path d="M722.3,1628.8H725.7M724.0,1627.0V1630.5" stroke="rgba(31,119,180,0.72)" stroke-width="1.2"/>
<path d="M721.8,1614.0L726.2,1618.4M726.2,1614.0L721.8,1618.4" stroke="rgba(31,119,180,0.72)" stroke-width="1.7"/>
<rect x="721.9" y="1611.4" width="4.2" height="4.2" fill="rgba(44,160,44,0.72)"/>
<rect x="722.3" y="1631.2" width="3.5" height="3.5" fill="rgba(44,160,44,0.72)"/>
<path d="M721.7,1615.8L726.3,1620.4M726.3,1615.8L721.7,1620.4" stroke="rgba(31,119,180,0.72)" stroke-width="1.7"/>
<circle cx="724.0" cy="1627.8" r="2.0" fill="rgba(240,120,20,0.66)"/>
<rect x="722.2" y="1629.1" width="3.6" height="3.6" fill="rgba(31,119,180,0.72)"/>
<path d="M720.4,1560.6H727.6M724.0,1557.0V1564.1" stroke="rgba(240,120,20,0.66)" stroke-width="2.6"/>
<circle cx="724.0" cy="1618.8" r="2.0" fill="rgba(44,160,44,0.72)"/>
<path d="M721.9,1620.1H726.1M724.0,1618.0V1622.2" stroke="rgba(240,120,20,0.66)" stroke-width="1.5"/>
<path d="M721.7,1614.5L726.3,1619.1M726.3,1614.5L721.7,1619.1" stroke="rgba(44,160,44,0.72)" stroke-width="1.8"/>
<rect x="722.6" y="1631.9" width="2.9" height="2.9" fill="rgba(31,119,180,0.72)"/>
<rect x="722.0" y="1622.5" width="4.0" height="4.0" fill="rgba(240,120,20,0.66)"/>
<path d="M721.1,1575.7L726.9,1581.6M726.9,1575.7L721.1,1581.6" stroke="rgba(240,120,20,0.66)" stroke-width="2.2"/>
<path d="M720.7,1568.5H727.3M724.0,1565.2V1571.8" stroke="rgba(44,160,44,0.72)" stroke-width="2.4"/>
<rect x="721.9" y="1622.0" width="4.2" height="4.2" fill="rgba(240,120,20,0.66)"/>
<circle cx="724.0" cy="1624.7" r="1.7" fill="rgba(44,160,44,0.72)"/>
<rect x="722.3" y="1623.5" width="3.5" height="3.5" fill="rgba(31,119,180,0.72)"/>
<circle cx="724.0" cy="1633.0" r="1.9" fill="rgba(240,120,20,0.66)"/>
<path d="M722.0,1612.3L726.0,1616.3M726.0,1612.3L722.0,1616.3" stroke="rgba(44,160,44,0.72)" stroke-width="1.5"/>
<rect x="721.4" y="1602.9" width="5.3" height="5.3" fill="rgba(31,119,180,0.72)"/>
<rect x="721.9" y="1623.1" width="4.2" height="4.2" fill="rgba(31,119,180,0.72)"/>
<rect x="721.4" y="1594.2" width="5.2" height="5.2" fill="rgba(240,120,20,0.66)"/>
<path d="M721.1,1589.9L726.9,1595.7M726.9,1589.9L721.1,1595.7" stroke="rgba(240,120,20,0.66)" stroke-width="2.2"/>
<circle cx="724.0" cy="1560.5" r="3.4" fill="rgba(31,119,180,0.72)"/>
<rect x="721.7" y="1605.0" width="4.7" height="4.7" fill="rgba(44,160,44,0.72)"/>
<circle cx="724.0" cy="1566.9" r="3.6" fill="rgba(44,160,44,0.72)"/>
<path d="M721.6,1613.2H726.4M724.0,1610.8V1615.5" stroke="rgba(44,160,44,0.72)" stroke-width="1.7"/>
<path d="M722.0,1614.2L726.0,1618.1M726.0,1614.2L722.0,1618.1" stroke="rgba(44,160,44,0.72)" stroke-width="1.5"/>
<rect x="722.1" y="1625.2" width="3.9" height="3.9" fill="rgba(44,160,44,0.72)"/>
<path d="M722.2,1630.2L725.8,1633.9M725.8,1630.2L722.2,1633.9" stroke="rgba(31,119,180,0.72)" stroke-width="1.4"/>
<path d="M722.6,1635.4L725.4,1638.2M725.4,1635.4L722.6,1638.2" stroke="rgba(240,120,20,0.66)" stroke-width="1.1"/>
<path d="M722.3,1634.6H725.7M724.0,1632.9V1636.3" stroke="rgba(44,160,44,0.72)" stroke-width="1.2"/>
<rect x="722.2" y="1622.1" width="3.6" height="3.6" fill="rgba(44,160,44,0.72)"/>
<rect x="721.8" y="1608.8" width="4.4" height="4.4" fill="rgba(240,120,20,0.66)"/>
<path d="M722.2,1623.3L725.8,1626.9M725.8,1623.3L722.2,1626.9" stroke="rgba(44,160,44,0.72)" stroke-width="1.4"/>
<path d="M722.5,1634.8L725.5,1637.8M725.5,1634.8L722.5,1637.8" stroke="rgba(31,119,180,0.72)" stroke-width="1.1"/>
<path d="M722.5,1637.0H725.5M724.0,1635.5V1638.5" stroke="rgba(31,119,180,0.72)" stroke-width="1.1"/>
<rect x="721.7" y="1605.2" width="4.7" height="4.7" fill="rgba(31,119,180,0.72)"/>
<path d="M722.6,1635.6L725.4,1638.3M725.4,1635.6L722.6,1638.3" stroke="rgba(31,119,180,0.72)" stroke-width="1.0"/>
<path d="M915.3,1598.1H920.3M917.8,1595.6V1600.6" stroke="rgba(31,119,180,0.72)" stroke-width="1.8"/>
<circle cx="917.8" cy="1594.1" r="2.9" fill="rgba(44,160,44,0.72)"/>
<rect x="914.3" y="1567.8" width="7.0" height="7.0" fill="rgba(44,160,44,0.72)"/>
<path d="M914.6,1578.7H921.0M917.8,1575.4V1581.9" stroke="rgba(240,120,20,0.66)" stroke-width="2.3"/>
<path d="M915.4,1604.0L920.2,1608.9M920.2,1604.0L915.4,1608.9" stroke="rgba(44,160,44,0.72)" stroke-width="1.8"/>
<path d="M916.0,1631.5H919.6M917.8,1629.7V1633.3" stroke="rgba(44,160,44,0.72)" stroke-width="1.3"/>
<circle cx="917.8" cy="1605.4" r="2.4" fill="rgba(44,160,44,0.72)"/>
<rect x="914.6" y="1563.8" width="6.4" height="6.4" fill="rgba(31,119,180,0.72)"/>
<path d="M916.2,1630.5L919.4,1633.7M919.4,1630.5L916.2,1633.7" stroke="rgba(31,119,180,0.72)" stroke-width="1.2"/>
<circle cx="917.8" cy="1610.1" r="2.0" fill="rgba(44,160,44,0.72)"/>
<rect x="915.5" y="1600.8" width="4.7" height="4.7" fill="rgba(240,120,20,0.66)"/>
<circle cx="917.8" cy="1609.6" r="2.5" fill="rgba(44,160,44,0.72)"/>
<circle cx="917.8" cy="1566.5" r="3.5" fill="rgba(44,160,44,0.72)"/>
<path d="M914.6,1582.6H921.0M917.8,1579.5V1585.8" stroke="rgba(240,120,20,0.66)" stroke-width="2.3"/>
<rect x="914.4" y="1568.7" width="6.8" height="6.8" fill="rgba(44,160,44,0.72)"/>
<path d="M915.8,1626.5H919.8M917.8,1624.5V1628.5" stroke="rgba(240,120,20,0.66)" stroke-width="1.4"/>
<path d="M916.1,1633.1L919.5,1636.4M919.5,1633.1L916.1,1636.4" stroke="rgba(31,119,180,0.72)" stroke-width="1.3"/>
<circle cx="917.8" cy="1592.8" r="2.6" fill="rgba(44,160,44,0.72)"/>
<path d="M915.9,1623.1L919.7,1626.9M919.7,1623.1L915.9,1626.9" stroke="rgba(44,160,44,0.72)" stroke-width="1.4"/>
<circle cx="917.8" cy="1636.8" r="1.4" fill="rgba(240,120,20,0.66)"/>
<rect x="915.0" y="1587.2" width="5.6" height="5.6" fill="rgba(44,160,44,0.72)"/>
<path d="M914.9,1583.5L920.7,1589.2M920.7,1583.5L914.9,1589.2" stroke="rgba(240,120,20,0.66)" stroke-width="2.2"/>
<rect x="914.5" y="1577.1" width="6.6" height="6.6" fill="rgba(240,120,20,0.66)"/>
<circle cx="917.8" cy="1562.2" r="3.5" fill="rgba(240,120,20,0.66)"/>
<path d="M914.6,1574.9H921.0M917.8,1571.7V1578.1" stroke="rgba(240,120,20,0.66)" stroke-width="2.3"/>
<rect x="914.3" y="1560.9" width="7.1" height="7.1" fill="rgba(31,119,180,0.72)"/>
<path d="M916.3,1630.2L919.3,1633.2M919.3,1630.2L916.3,1633.2" stroke="rgba(240,120,20,0.66)" stroke-width="1.1"/>
<path d="M914.5,1571.5L921.1,1578.2M921.1,1571.5L914.5,1578.2" stroke="rgba(31,119,180,0.72)" stroke-width="2.5"/>
<path d="M916.2,1626.4H919.4M917.8,1624.8V1628.0" stroke="rgba(240,120,20,0.66)" stroke-width="1.1"/>
<path d="M916.3,1637.0H919.3M917.8,1635.4V1638.5" stroke="rgba(44,160,44,0.72)" stroke-width="1.1"/>
<rect x="915.9" y="1619.8" width="3.8" height="3.8" fill="rgba(240,120,20,0.66)"/>
<path d="M915.9,1618.7L919.7,1622.6M919.7,1618.7L915.9,1622.6" stroke="rgba(31,119,180,0.72)" stroke-width="1.4"/>
<path d="M915.5,1619.0H920.1M917.8,1616.8V1621.3" stroke="rgba(31,119,180,0.72)" stroke-width="1.6"/>
<circle cx="917.8" cy="1628.6" r="1.7" fill="rgba(44,160,44,0.72)"/>
<path d="M915.4,1616.4H920.2M917.8,1614.1V1618.8" stroke="rgba(240,120,20,0.66)" stroke-width="1.7"/>
<path d="M915.1,1595.2L920.5,1600.6M920.5,1595.2L915.1,1600.6" stroke="rgba(240,120,20,0.66)" stroke-width="2.1"/>
<path d="M914.7,1568.1L920.9,1574.3M920.9,1568.1L914.7,1574.3" stroke="rgba(31,119,180,0.72)" stroke-width="2.3"/>
<rect x="914.8" y="1588.0" width="6.0" height="6.0" fill="rgba(31,119,180,0.72)"/>
<path d="M915.4,1609.0L920.2,1613.7M920.2,1609.0L915.4,1613.7" stroke="rgba(31,119,180,0.72)" stroke-width="1.8"/>
<path d="M914.5,1578.6H921.1M917.8,1575.3V1581.8" stroke="rgba(31,119,180,0.72)" stroke-width="2.4"/>
<rect x="915.3" y="1591.5" width="5.0" height="5.0" fill="rgba(44,160,44,0.72)"/>
<path d="M914.2,1562.5H921.4M917.8,1558.9V1566.1" stroke="rgba(240,120,20,0.66)" stroke-width="2.6"/>
<path d="M916.3,1630.4L919.3,1633.3M919.3,1630.4L916.3,1633.3" stroke="rgba(240,120,20,0.66)" stroke-width="1.1"/>
<rect x="914.3" y="1559.8" width="7.0" height="7.0" fill="rgba(31,119,180,0.72)"/>
<path d="M915.6,1616.5L920.0,1620.8M920.0,1616.5L915.6,1620.8" stroke="rgba(240,120,20,0.66)" stroke-width="1.6"/>
<path d="M914.0,1554.0L921.6,1561.5M921.6,1554.0L914.0,1561.5" stroke="rgba(240,120,20,0.66)" stroke-width="2.9"/>
<path d="M916.0,1621.7H919.6M917.8,1619.9V1623.5" stroke="rgba(31,119,180,0.72)" stroke-width="1.3"/>
<rect x="915.9" y="1628.7" width="3.8" height="3.8" fill="rgba(44,160,44,0.72)"/>
<rect x="915.2" y="1603.6" width="5.2" height="5.2" fill="rgba(240,120,20,0.66)"/>
<path d="M914.2,1555.4H921.4M917.8,1551.8V1559.0" stroke="rgba(240,120,20,0.66)" stroke-width="2.6"/>
<circle cx="917.8" cy="1628.8" r="1.7" fill="rgba(31,119,180,0.72)"/>
<rect x="916.3" y="1632.6" width="3.0" height="3.0" fill="rgba(240,120,20,0.66)"/>
<circle cx="917.8" cy="1599.7" r="2.7" fill="rgba(44,160,44,0.72)"/>
<rect x="915.8" y="1613.6" width="4.0" height="4.0" fill="rgba(240,120,20,0.66)"/>
<path d="M914.7,1582.0H920.9M917.8,1578.9V1585.0" stroke="rgba(240,120,20,0.66)" stroke-width="2.2"/>
<rect x="915.8" y="1615.4" width="3.9" height="3.9" fill="rgba(31,119,180,0.72)"/>
<path d="M916.0,1625.3H919.6M917.8,1623.5V1627.2" stroke="rgba(44,160,44,0.72)" stroke-width="1.3"/>
<circle cx="917.8" cy="1560.2" r="3.4" fill="rgba(31,119,180,0.72)"/>
<path d="M914.9,1586.3H920.7M917.8,1583.4V1589.2" stroke="rgba(44,160,44,0.72)" stroke-width="2.1"/>
<path d="M916.3,1634.9H919.3M917.8,1633.4V1636.4" stroke="rgba(240,120,20,0.66)" stroke-width="1.1"/>
<rect x="1109.8" y="1631.8" width="3.3" height="3.3" fill="rgba(31,119,180,0.72)"/>
<path d="M1108.7,1590.9H1114.3M1111.5,1588.1V1593.7" stroke="rgba(31,119,180,0.72)" stroke-width="2.0"/>
<rect x="1109.9" y="1634.5" width="3.2" height="3.2" fill="rgba(31,119,180,0.72)"/>
<path d="M1109.9,1634.6L1113.1,1637.8M1113.1,1634.6L1109.9,1637.8" stroke="rgba(31,119,180,0.72)" stroke-width="1.2"/>
<path d="M1109.0,1604.8H1114.0M1111.5,1602.2V1607.3" stroke="rgba(44,160,44,0.72)" stroke-width="1.8"/>
<path d="M1109.6,1632.0L1113.4,1635.7M1113.4,1632.0L1109.6,1635.7" stroke="rgba(44,160,44,0.72)" stroke-width="1.4"/>
<path d="M1109.6,1627.3L1113.4,1631.1M1113.4,1627.3L1109.6,1631.1" stroke="rgba(31,119,180,0.72)" stroke-width="1.4"/>
<path d="M1110.1,1635.6L1112.9,1638.4M1112.9,1635.6L1110.1,1638.4" stroke="rgba(240,120,20,0.66)" stroke-width="1.1"/>
<rect x="1109.5" y="1619.3" width="4.0" height="4.0" fill="rgba(240,120,20,0.66)"/>
<circle cx="1111.5" cy="1603.2" r="2.6" fill="rgba(240,120,20,0.66)"/>
<circle cx="1111.5" cy="1621.9" r="2.0" fill="rgba(31,119,180,0.72)"/>
<path d="M1108.9,1591.6H1114.1M1111.5,1589.0V1594.3" stroke="rgba(31,119,180,0.72)" stroke-width="1.9"/>
<path d="M1108.8,1589.6L1114.2,1595.1M1114.2,1589.6L1108.8,1595.1" stroke="rgba(31,119,180,0.72)" stroke-width="2.1"/>
<path d="M1108.6,1589.6H1114.4M1111.5,1586.7V1592.5" stroke="rgba(240,120,20,0.66)" stroke-width="2.1"/>
<path d="M1109.6,1626.9L1113.4,1630.8M1113.4,1626.9L1109.6,1630.8" stroke="rgba(44,160,44,0.72)" stroke-width="1.5"/>
<path d="M1110.0,1635.2H1113.0M1111.5,1633.7V1636.7" stroke="rgba(31,119,180,0.72)" stroke-width="1.1"/>
<rect x="1108.5" y="1574.4" width="6.0" height="6.0" fill="rgba(240,120,20,0.66)"/>
<path d="M1108.3,1580.1L1114.7,1586.6M1114.7,1580.1L1108.3,1586.6" stroke="rgba(31,119,180,0.72)" stroke-width="2.4"/>
<rect x="1109.2" y="1605.2" width="4.7" height="4.7" fill="rgba(31,119,180,0.72)"/>
<circle cx="1111.5" cy="1568.0" r="3.2" fill="rgba(44,160,44,0.72)"/>
<rect x="1109.1" y="1613.3" width="4.7" height="4.7" fill="rgba(31,119,180,0.72)"/>
<circle cx="1111.5" cy="1631.9" r="1.5" fill="rgba(44,160,44,0.72)"/>
<path d="M1109.6,1613.8L1113.4,1617.6M1113.4,1613.8L1109.6,1617.6" stroke="rgba(44,160,44,0.72)" stroke-width="1.5"/>
<rect x="1110.0" y="1633.3" width="2.9" height="2.9" fill="rgba(240,120,20,0.66)"/>
<path d="M1108.9,1593.7H1114.1M1111.5,1591.1V1596.3" stroke="rgba(31,119,180,0.72)" stroke-width="1.9"/>
<path d="M1108.6,1583.9L1114.4,1589.6M1114.4,1583.9L1108.6,1589.6" stroke="rgba(240,120,20,0.66)" stroke-width="2.2"/>
<circle cx="1111.5" cy="1633.5" r="1.4" fill="rgba(240,120,20,0.66)"/>
<circle cx="1111.5" cy="1613.6" r="2.4" fill="rgba(44,160,44,0.72)"/>
<path d="M1109.6,1626.4L1113.4,1630.2M1113.4,1626.4L1109.6,1630.2" stroke="rgba(240,120,20,0.66)" stroke-width="1.5"/>
<circle cx="1111.5" cy="1612.7" r="2.2" fill="rgba(44,160,44,0.72)"/>
<path d="M1109.5,1617.2H1113.5M1111.5,1615.2V1619.2" stroke="rgba(31,119,180,0.72)" stroke-width="1.4"/>
<path d="M1108.5,1585.6H1114.5M1111.5,1582.6V1588.6" stroke="rgba(31,119,180,0.72)" stroke-width="2.2"/>
<path d="M1109.7,1625.8H1113.3M1111.5,1624.0V1627.6" stroke="rgba(31,119,180,0.72)" stroke-width="1.3"/>
<circle cx="1111.5" cy="1610.1" r="2.1" fill="rgba(240,120,20,0.66)"/>
<path d="M1110.0,1633.9L1113.0,1636.8M1113.0,1633.9L1110.0,1636.8" stroke="rgba(240,120,20,0.66)" stroke-width="1.1"/>
<circle cx="1111.5" cy="1562.9" r="3.7" fill="rgba(240,120,20,0.66)"/>
<path d="M1108.9,1587.7L1114.1,1592.8M1114.1,1587.7L1108.9,1592.8" stroke="rgba(240,120,20,0.66)" stroke-width="1.9"/>
<circle cx="1111.5" cy="1583.8" r="3.1" fill="rgba(31,119,180,0.72)"/>
<path d="M1109.7,1633.5H1113.3M1111.5,1631.8V1635.3" stroke="rgba(240,120,20,0.66)" stroke-width="1.3"/>
<path d="M1107.9,1567.6H1115.1M1111.5,1564.0V1571.3" stroke="rgba(31,119,180,0.72)" stroke-width="2.6"/>
<path d="M1109.6,1627.8L1113.4,1631.6M1113.4,1627.8L1109.6,1631.6" stroke="rgba(44,160,44,0.72)" stroke-width="1.4"/>
<path d="M1108.9,1595.3L1114.1,1600.4M1114.1,1595.3L1108.9,1600.4" stroke="rgba(240,120,20,0.66)" stroke-width="2.0"/>
<circle cx="1111.5" cy="1581.0" r="2.9" fill="rgba(44,160,44,0.72)"/>
<rect x="1108.7" y="1581.3" width="5.5" height="5.5" fill="rgba(240,120,20,0.66)"/>
<path d="M1109.7,1634.5L1113.3,1638.1M1113.3,1634.5L1109.7,1638.1" stroke="rgba(31,119,180,0.72)" stroke-width="1.4"/>
<circle cx="1111.5" cy="1570.8" r="3.4" fill="rgba(240,120,20,0.66)"/>
<path d="M1109.5,1628.2H1113.5M1111.5,1626.2V1630.3" stroke="rgba(240,120,20,0.66)" stroke-width="1.5"/>
<rect x="1108.1" y="1557.9" width="6.8" height="6.8" fill="rgba(31,119,180,0.72)"/>
<rect x="1109.2" y="1608.1" width="4.6" height="4.6" fill="rgba(44,160,44,0.72)"/>
<circle cx="1111.5" cy="1582.0" r="2.9" fill="rgba(240,120,20,0.66)"/>
<path d="M1108.9,1598.8L1114.1,1604.1M1114.1,1598.8L1108.9,1604.1" stroke="rgba(240,120,20,0.66)" stroke-width="2.0"/>
<rect x="1109.9" y="1627.1" width="3.3" height="3.3" fill="rgba(31,119,180,0.72)"/>
<rect x="1110.0" y="1629.8" width="3.0" height="3.0" fill="rgba(240,120,20,0.66)"/>
<rect x="1109.6" y="1623.7" width="3.7" height="3.7" fill="rgba(44,160,44,0.72)"/>
<circle cx="1111.5" cy="1594.0" r="2.7" fill="rgba(44,160,44,0.72)"/>
<circle cx="1111.5" cy="1636.2" r="1.8" fill="rgba(240,120,20,0.66)"/>
<path d="M1109.9,1626.9H1113.1M1111.5,1625.3V1628.5" stroke="rgba(240,120,20,0.66)" stroke-width="1.1"/>
<circle cx="1111.5" cy="1622.8" r="1.8" fill="rgba(31,119,180,0.72)"/>
<rect x="1108.0" y="1557.7" width="7.0" height="7.0" fill="rgba(31,119,180,0.72)"/>
<path d="M1108.3,1572.6H1114.7M1111.5,1569.5V1575.8" stroke="rgba(44,160,44,0.72)" stroke-width="2.3"/>
<circle cx="530.3" cy="1266.4" r="8.0" fill="rgba(44,160,44,0.72)"/>
<rect x="526.7" y="1477.6" width="7.2" height="7.2" fill="rgba(31,119,180,0.72)"/>
<path d="M526.1,1498.3L534.5,1506.7M534.5,1498.3L526.1,1506.7" stroke="rgba(31,119,180,0.72)" stroke-width="3.2"/>
<path d="M526.1,1521.4H534.5M530.3,1517.2V1525.6" stroke="rgba(31,119,180,0.72)" stroke-width="3.0"/>
<path d="M527.1,1561.6H533.5M530.3,1558.4V1564.8" stroke="rgba(31,119,180,0.72)" stroke-width="2.3"/>
<circle cx="724.0" cy="1532.9" r="4.4" fill="rgba(31,119,180,0.72)"/>
<rect x="720.8" y="1554.3" width="6.4" height="6.4" fill="rgba(240,120,20,0.66)"/>
<rect x="912.8" y="1345.0" width="10.0" height="10.0" fill="rgba(240,120,20,0.66)"/>
<rect x="914.2" y="1471.0" width="7.2" height="7.2" fill="rgba(31,119,180,0.72)"/>
<path d="M913.8,1487.8H921.8M917.8,1483.8V1491.8" stroke="rgba(240,120,20,0.66)" stroke-width="2.9"/>
<circle cx="917.8" cy="1494.3" r="4.0" fill="rgba(31,119,180,0.72)"/>
<path d="M913.8,1498.4H921.8M917.8,1494.4V1502.4" stroke="rgba(31,119,180,0.72)" stroke-width="2.9"/>
<path d="M914.4,1548.4H921.2M917.8,1545.0V1551.8" stroke="rgba(44,160,44,0.72)" stroke-width="2.4"/>
<path d="M1106.7,1401.8L1116.3,1411.4M1116.3,1401.8L1106.7,1411.4" stroke="rgba(31,119,180,0.72)" stroke-width="3.6"/>
<path d="M1107.1,1451.7H1115.9M1111.5,1447.3V1456.1" stroke="rgba(44,160,44,0.72)" stroke-width="3.2"/>
<path d="M1107.1,1464.0H1115.9M1111.5,1459.6V1468.4" stroke="rgba(31,119,180,0.72)" stroke-width="3.2"/>
<circle cx="1111.5" cy="1505.8" r="4.3" fill="rgba(240,120,20,0.66)"/>
<rect x="1108.9" y="1545.8" width="5.2" height="5.2" fill="rgba(31,119,180,0.72)"/>
<path d="M1108.1,1551.6L1114.9,1558.4M1114.9,1551.6L1108.1,1558.4" stroke="rgba(240,120,20,0.66)" stroke-width="2.6"/>
<circle cx="1111.5" cy="1564.8" r="3.2" fill="rgba(31,119,180,0.72)"/>
  <rect x="1176.8" y="1250.9" width="79.3" height="185.6" rx="2" fill="rgba(255,255,255,0.8)" stroke="#e0e0e0" stroke-width="1"/>
  <g font-size="8.4" fill="#222"><text x="1203" y="1260.3">Segment</text>
<text x="1203" y="1272.5">Consumer</text>
<text x="1203" y="1284.6">Corporate</text>
<text x="1203" y="1296.8">Home Office</text>
<text x="1203" y="1309.0">Sales_VAT_1</text>
<text x="1203" y="1321.1">5000</text>
<text x="1203" y="1333.3">10000</text>
<text x="1203" y="1345.5">15000</text>
<text x="1203" y="1357.7">20000</text>
<text x="1203" y="1369.8">25000</text>
<text x="1203" y="1382.0">Region</text>
<text x="1203" y="1394.2">South</text>
<text x="1203" y="1406.3">West</text>
<text x="1203" y="1418.5">Central</text>
<text x="1203" y="1430.7">East</text>
<circle cx="1188.2" cy="1269.5" r="2.0" fill="rgba(31,119,180,0.72)"/>
<circle cx="1188.2" cy="1281.6" r="2.0" fill="rgba(240,120,20,0.66)"/>
<circle cx="1188.2" cy="1293.8" r="2.0" fill="rgba(44,160,44,0.72)"/>
<circle cx="1188.2" cy="1318.1" r="3.7" fill="rgba(60,60,60,0.75)"/>
<circle cx="1188.2" cy="1330.3" r="4.8" fill="rgba(60,60,60,0.75)"/>
<circle cx="1188.2" cy="1342.5" r="5.9" fill="rgba(60,60,60,0.75)"/>
<circle cx="1188.2" cy="1354.7" r="6.7" fill="rgba(60,60,60,0.75)"/>
<circle cx="1188.2" cy="1366.8" r="7.4" fill="rgba(60,60,60,0.75)"/>
<circle cx="1188.2" cy="1391.2" r="2.1" fill="rgba(50,50,50,0.8)"/>
<path d="M1186.4,1401.5L1190.0,1405.1M1190.0,1401.5L1186.4,1405.1" stroke="rgba(50,50,50,0.8)" stroke-width="1.4"/>
<circle cx="1188.2" cy="1415.5" r="1.9" fill="rgba(50,50,50,0.8)"/>
<path d="M1186.3,1427.7H1190.1M1188.2,1425.8V1429.6" stroke="rgba(50,50,50,0.8)" stroke-width="1.4"/></g>

  <!-- partial right chart -->
  <text transform="translate(2436,1106) rotate(-90)" font-size="8.4" fill="#444" text-anchor="middle">Average Monthly Charges ($)</text>
  <g font-size="8.4" fill="#444"><text x="2441" y="999">80</text><text x="2441" y="1067">60</text><text x="2441" y="1136">40</text><text x="2441" y="1204.6">20</text><text x="2443" y="1280">0</text></g>
  </g>
</svg>
<div class="bd" style="left:0;top:0;width:2452px;height:5px"></div><div class="bd" style="left:0;top:1839px;width:2452px;height:5px"></div><div class="bd" style="left:0;top:5px;width:5px;height:1834px"></div><div class="bd" style="left:2447px;top:5px;width:5px;height:1834px"></div>
</body></html>
